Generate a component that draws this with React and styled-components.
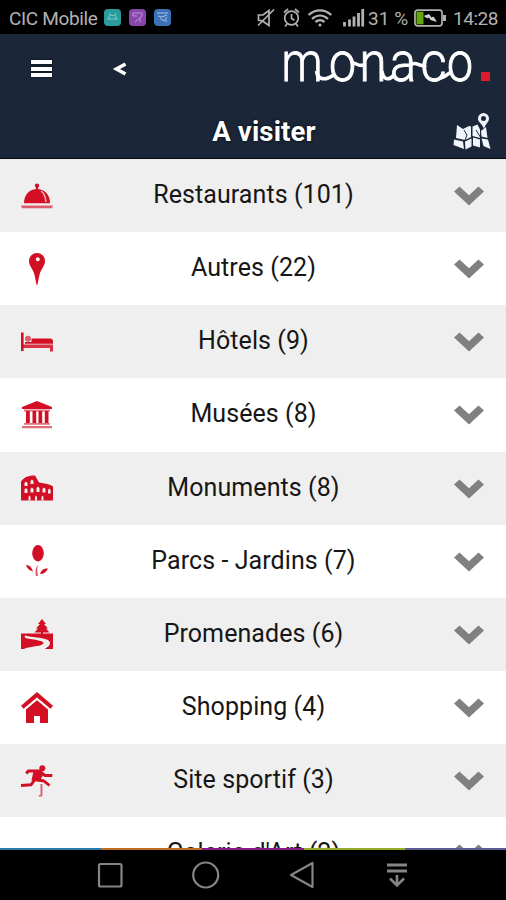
import styled, { createGlobalStyle } from "styled-components"

const GlobalStyle = createGlobalStyle`
  * { box-sizing: border-box; }
  body {
    margin: 0;
    background: #000;
    font-family: Roboto, "Liberation Sans", sans-serif;
  }
`;

const Screen = styled.div`
  width: 506px;
  height: 900px;
  display: flex;
  flex-direction: column;
  overflow: hidden;
`;

const StatusBar = styled.div`
  height: 34px;
  padding: 2px 8px 0 9px;
  background: #000;
  color: #b2b2b2;
  display: flex;
  align-items: center;
  font-size: 19px;
  white-space: nowrap;
`;
const Carrier = styled.span`
  width: 95px;
  letter-spacing: -0.35px;
`;
const AppBadge = styled.span`
  width: 17px;
  height: 17px;
  margin-right: 8px;
  margin-top: -2px;
  border-radius: 4px;
  background: ${props => props.color};
  display: flex;
  align-items: center;
  justify-content: center;
`;
const StatusIcons = styled.div`
  margin-left: auto;
  margin-top: -1px;
  display: flex;
`;
const Percent = styled.span`
  width: 46px;
  letter-spacing: 0.1px;
`;
const Clock = styled.span`
  width: 45px;
  margin-left: 7px;
  letter-spacing: -0.45px;
`;

const Header = styled.header`
  height: 125px;
  flex: none;
  background: #1b2739;
  border-bottom: 1px solid #05080d;
  color: white;
`;
const TopRow = styled.div`
  height: 68px;
  display: flex;
  align-items: flex-start;
  padding: 0 14px 0 28px;
`;
const Menu = styled.button`
  border: none;
  background: none;
  margin-top: 11px;
  padding: 13px 1px 13px 3px;
  width: 25px;
  height: 50px;
`;
const Bar = styled.span`
  display: block;
  height: 4px;
  margin-bottom: 2.5px;
  background: white;
  box-shadow: 0 0 2px #000;
`;
const Back = styled.button`
  border: none;
  background: none;
  color: white;
  padding: 0;
  margin-top: 13px;
  margin-left: 56px;
  width: 20px;
  height: 46px;
`;
const Logo = styled.svg`
  margin-left: auto;
  overflow: visible;
  font-family: Roboto, sans-serif;
  font-weight: 300;
`;
const TitleRow = styled.div`
  height: 56px;
  display: grid;
  grid-template-columns: 68px 1fr 68px;
  align-items: center;
  svg {
    justify-self: end;
    margin: 4px 14px 0 0;
  }
`;
const Title = styled.h1`
  grid-column: 2;
  margin: 3px 0 0;
  padding-left: 22px;
  text-align: center;
  font-size: 27.5px;
  line-height: 30px;
  letter-spacing: 0.15px;
  font-weight: 700;
  text-shadow: 0 0 3px #000;
`;

const List = styled.main`
  position: relative;
  flex: 1;
  min-height: 0;
  overflow: hidden;
  background: white;
`;
const Row = styled.div`
  height: 73.15px;
  display: grid;
  grid-template-columns: 74px 1fr 74px;
  align-items: center;
  justify-items: center;
  background: ${props => props.$shaded ? "#efefef" : "#fff"};
`;
const Label = styled.span`
  color: #161616;
  font-size: 25px;
  line-height: 30px;
  letter-spacing: 0.08px;
  margin-top: -1px;
  margin-left: 1px;
  white-space: nowrap;
`;
const RowIcon = styled.svg`
  width: 32px;
  height: 32px;
  display: block;
  fill: #d20f24;
`;
const Arrow = styled.svg`
  display: block;
  width: 30px;
  height: 20px;
  margin-top: 1px;
  fill: #808080;
`;
const Stripe = styled.div`
  position: absolute;
  left: 0;
  right: 0;
  bottom: 0;
  height: 2px;
  display: flex;
`;
const Segment = styled.span`
  flex: 1;
  background: ${props => props.color};
`;

const NavBar = styled.nav`
  height: 50px;
  flex: none;
  background: #000;
  display: flex;
  justify-content: center;
  align-items: center;
  gap: 64px;
  svg {
    width: 32px;
    height: 32px;
    fill: none;
    stroke: #858585;
    stroke-width: 2.2;
  }
`;

const icons = {
  restaurant: (
    <>
      <circle cx="16" cy="5.6" r="2.2" />
      <path d="M15 7h2v3h-2z" />
      <path d="M3 23.3C3 14 9 9 16 9s13 5 13 14.300z" />
      <path d="M20 11c3 2 4.500 6 5 11" fill="none" stroke="#f3b5ba" strokeWidth="1.500" />
      <path d="M0 25.500h32l-1 2.700H1z" opacity=".65" />
    </>
  ),
  pin: <path fillRule="evenodd" d="M16 0a8 8 0 0 1 8 8c0 5-4 8-5.300 13L16.300 32h-.7L13.300 21C12 16 8 13 8 8a8 8 0 0 1 8-8zm.8 4.200a2 2 0 1 0 0 4 2 2 0 0 0 0-4z" />,
  bed: (
    <>
      <path d="M0 6.500h2.600V25H0z" />
      <circle cx="7" cy="12.800" r="3" opacity=".65" />
      <path d="M10.500 12.500H29a3 3 0 0 1 3 3v2.300H4v-1.800h6.500z" />
      <path d="M2 18.500h30v7h-3v-3.500H2z" opacity=".85" />
    </>
  ),
  museum: (
    <>
      <path d="M16 2l15 6v2H1V8z" />
      <path d="M3 10.500h26v2H3z" opacity=".6" />
      <path d="M5 12h3.800v12H5zM11.500 12h3.700v12h-3.700zM17.500 12h3.700v12h-3.700zM23.800 12h3.700v12h-3.700z" />
      <path d="M3 24h26v1.800H3zM1 27h30v2.300H1z" opacity=".6" />
    </>
  ),
  monument: (
    <>
      <path d="M0 28.500V9.500C3 5 8 3.500 14 3.500l4 7c6 1 11 1.500 14 4v14z" />
      <path d="M3.500 14v-3l1.500-1.500L6.500 11v3zM9.500 12V9L11 7.500 12.500 9v3zM3.500 21v-3.500L5 16l1.500 1.500V21zM9.500 20.500V17l1.500-1.500 1.500 1.500v3.500zM15.500 20v-4l1.500-1.500 1.500 1.500v4zM21.500 20.500V17l1.500-1.500 1.500 1.500v3.500zM27 21.500V18l1.300-1.500 1.300 1.500v3.500zM7.500 28.500V25l1-1.500 1 1.500v3.500zM14 28.500V25l1-1.500 1 1.500v3.500zM20.500 28.500V25l1-1.500 1 1.500v3.500z" fill="#efefef" />
    </>
  ),
  garden: (
    <>
      <ellipse cx="17" cy="8.300" rx="5.800" ry="8.200" />
      <path d="M17.500 19.500c-2 3-1 7-.5 11.500h-2c-1-5-.5-9 2.500-11.500z" opacity=".7" />
      <path d="M5 20c4 0 6 3 7 6.500C8.500 25.500 6 23.500 5 20zM19 29c1-4 4-6 8-5.500-1.500 3.500-4 5.500-8 5.500z" />
    </>
  ),
  walk: (
    <>
      <path d="M21 1l4 5h-2l4 4.500h-2l3.500 4h-6.500V17h-2v-2.500h-6.500l3.500-4h-2l4-4.500h-2z" />
      <path d="M0 15.500h32V31H0z" />
      <path d="M3 31c5-3 15-2 19-5 3-3-7-4-16-5.500-3-1-3-2.500-1-3 3 2.500 24 1 24 7.500 0 3-3 4-5 6z" fill="#efefef" />
    </>
  ),
  shopping: (
    <>
      <path d="M16 0l16 13.700-2.500 3L16 5.500 2.500 16.700 0 13.700z" />
      <path d="M16 8.200l11 9.300V31h-8v-7h-6v7H5V17.500z" />
    </>
  ),
  sport: (
    <>
      <circle cx="21.300" cy="3.300" r="3" />
      <path d="M12.500 6H21l1 4-3.500 6.500-8-1z" />
      <path d="M5.300 8.500l2-2.500H18l6 4.500h7.300M15 13l-5 6.800-10 .7M14 14.500l9 1.500 5.500 4.500" fill="none" stroke="#d20f24" strokeWidth="2.900" strokeLinejoin="round" />
      <path d="M19.500 19h1.900v12.500H17.700V30h1.800z" opacity=".65" />
    </>
  ),
};

const categories = [
  { icon: "restaurant", label: "Restaurants (101)" },
  { icon: "pin", label: "Autres (22)" },
  { icon: "bed", label: "Hôtels (9)" },
  { icon: "museum", label: "Musées (8)" },
  { icon: "monument", label: "Monuments (8)" },
  { icon: "garden", label: "Parcs - Jardins (7)" },
  { icon: "walk", label: "Promenades (6)" },
  { icon: "shopping", label: "Shopping (4)" },
  { icon: "sport", label: "Site sportif (3)" },
  { label: "Galerie d'Art (2)" },
];

const stripeColors = ["#2b79ad", "#c26e22", "#8b1a8e", "#98ad2e", "#5b5c94"];

const Chevron = () => (
  <Arrow viewBox="0 0 30 20">
    <path d="M0 5.500L5.500.5 15 9.200 24.500.5 30 5.500 15 19.500z" />
  </Arrow>
)

const StatusGlyphs = () => (
  <svg width="111" height="26" viewBox="257 5 111 26" fill="none" stroke="#b2b2b2" strokeWidth="1.700">
    <path d="M258.500 15v5.500h3.500l7 5V10.500l-6 4.500zM258 25.500L274 9.500" />
    <circle cx="291.500" cy="18" r="6.800" />
    <path d="M291.500 14v4.500l3 1.800M284 12.500l4-3.500M299 12.500L295 9M287 24l-2 2.500M296 24l2 2.500" />
    <path d="M308.500 15c7-6.300 15.800-6.300 22.800 0M312 18.800c5-4.300 11-4.300 16 0M315.500 22c3-2.500 6-2.500 9 0" strokeWidth="2.300" />
    <circle cx="320" cy="25" r="1.500" fill="#b2b2b2" stroke="none" />
    <path d="M344.500 22v4.500M349.500 19.500v7M354 16.500v10M358.500 13v13.500M362.700 9v17.500" strokeWidth="2.800" />
  </svg>
)

const Battery = () => (
  <svg width="32" height="18" viewBox="0 0 32 18">
    <rect x="1" y="1.200" width="27" height="15.600" rx="2.500" fill="none" stroke="#b2b2b2" strokeWidth="1.700" />
    <path d="M2.500 2.700h7v12.600h-7z" fill="#65a60c" />
    <path d="M29 6h3v6h-3z" fill="#b2b2b2" />
    <path d="M9.500 7l5.500-2 2.500 3.500 2-1L23 13l-6.500-2-1.500-2.500-1.500 1z" fill="#d0d0d0" />
  </svg>
)

// the wordmark is real text, the links between the letters are strokes
const Wordmark = () => (
  <Logo width="212" height="68" viewBox="280 34 212 68" fill="#fff">
    <g fontSize="55" stroke="#fff" strokeWidth="0.900">
      <text x="281.500" y="80.500" textLength="41" lengthAdjust="spacingAndGlyphs">m</text>
      <text x="329" y="80.500" textLength="27" lengthAdjust="spacingAndGlyphs">o</text>
      <text x="359.500" y="80.500" textLength="27" lengthAdjust="spacingAndGlyphs">n</text>
      <text x="390" y="80.500" textLength="26" lengthAdjust="spacingAndGlyphs">a</text>
      <text x="420.500" y="80.500" textLength="26" lengthAdjust="spacingAndGlyphs">c</text>
      <text x="447" y="80.500" textLength="26" lengthAdjust="spacingAndGlyphs">o</text>
    </g>
    <path d="M316.500 71c1 9 9 10 17 4M352 64c3-3 5 3 12 1M382 71c1 9 7 10 12 4M411 65c5-5 8 3 15 0M441 78c5-1 6-4 10-6" fill="none" stroke="#fff" strokeWidth="3.600" />
    <path d="M481 72h9v9h-9z" fill="#e21b2c" />
  </Logo>
)

const MapIcon = () => (
  <svg width="40" height="38" viewBox="0 0 40 38" fill="#f1f5fb">
    <path fillRule="evenodd" d="M31.500 0a5.500 5.500 0 0 1 5.500 5.700c0 3-3.500 5-5 10-2-5-6-7-6-10A5.500 5.500 0 0 1 31.500 0zm0 3a2.500 2.500 0 1 0 0 5 2.500 2.500 0 0 0 0-5z" />
    <path d="M5 12l6 4 6-3 2 .5V24l-6 3-9-2zM20.500 13.500l5-2 2.500 5V25l-7.500-2zM29 18l5-4 1.500 11-6-1.500zM2 26.500l9 2 1 7.500-10.500-4zM13 28.500l6.500-3v8l-6 3zM21 24.500l7 2v8l-7-2zM29.500 25.500l6.500 1 2.500 9.500-7-3z" />
    <path d="M12 17l3 5-2 5M24 17l5 8" fill="none" stroke="#1b2739" strokeWidth="1" />
  </svg>
)

const App = () => {
  return (
    <Screen>
      <GlobalStyle />
      <StatusBar>
        <Carrier>CIC Mobile</Carrier>
        <AppBadge color="#299b9b">
          <svg width="13" height="10" fill="none" stroke="#7fcaca"><path d="M1 7h11M3 7V4l3-1 4 1v3M3 1l1 2M10 1L9 3" /></svg>
        </AppBadge>
        <AppBadge color="#8747aa">
          <svg width="13" height="12" fill="none" stroke="#c295d6"><path d="M2 2h9v3M2 2v3h4M11 5L4 11M9 7v4" /></svg>
        </AppBadge>
        <AppBadge color="#3c70b7">
          <svg width="13" height="12" fill="none" stroke="#a5c4ec"><path d="M1 2h11M2 5l4 1 5-2M4 7l4 3 3-4M9 10h2" /></svg>
        </AppBadge>
        <StatusIcons><StatusGlyphs /></StatusIcons>
        <Percent>31 %</Percent>
        <Battery />
        <Clock>14:28</Clock>
      </StatusBar>
      <Header>
        <TopRow>
          <Menu><Bar /><Bar /><Bar /></Menu>
          <Back>
            <svg width="16" height="16" viewBox="0 0 16 16"><path d="M14.500 3L5.500 8l9 5" fill="none" stroke="#fff" strokeWidth="3.600" /></svg>
          </Back>
          <Wordmark />
        </TopRow>
        <TitleRow>
          <Title>A visiter</Title>
          <MapIcon />
        </TitleRow>
      </Header>
      <List>
        {categories.map((item, i) => (
          <Row key={item.label} $shaded={i % 2 === 0}>
            <RowIcon viewBox="0 0 32 32">{icons[item.icon]}</RowIcon>
            <Label>{item.label}</Label>
            <Chevron />
          </Row>
        ))}
        <Stripe>
          {stripeColors.map(c => <Segment key={c} color={c} />)}
        </Stripe>
      </List>
      <NavBar>
        <svg viewBox="0 0 32 32"><rect x="6" y="5" width="22.500" height="22.500" rx="1.500" /></svg>
        <svg viewBox="0 0 32 32"><circle cx="16.700" cy="16" r="12.500" /></svg>
        <svg viewBox="0 0 32 32"><path d="M27.500 4v24L6 16z" strokeLinejoin="round" /></svg>
        <svg viewBox="0 0 32 32"><path d="M6 6h20M6 12h20" strokeWidth="2.800" /><path d="M16 16v10M9 19.500l7 7 7-7" strokeWidth="2.600" /></svg>
      </NavBar>
    </Screen>
  )
}

export default App
